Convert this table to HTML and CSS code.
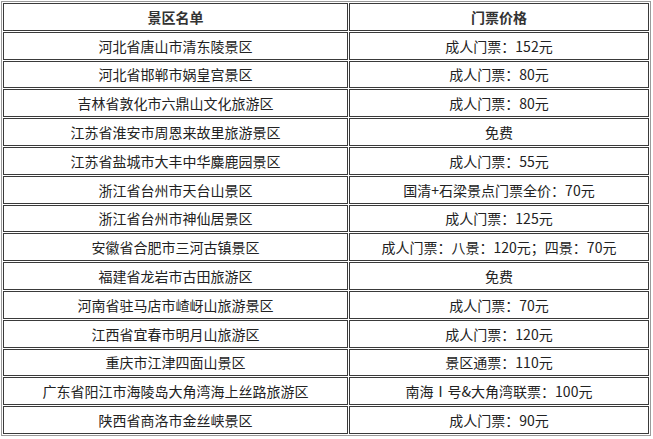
FILE: index.html
```html
<!DOCTYPE html>
<html lang="zh">
<head>
<meta charset="utf-8">
<title>景区名单</title>
<link rel="stylesheet" href="styles.css">
</head>
<body>
<table class="price-table">
  <thead>
    <tr><th class="col-name">景区名单</th><th class="col-price">门票价格</th></tr>
  </thead>
  <tbody>
    <tr><td>河北省唐山市清东陵景区</td><td>成人门票：152元</td></tr>
    <tr><td>河北省邯郸市娲皇宫景区</td><td>成人门票：80元</td></tr>
    <tr><td>吉林省敦化市六鼎山文化旅游区</td><td>成人门票：80元</td></tr>
    <tr><td>江苏省淮安市周恩来故里旅游景区</td><td>免费</td></tr>
    <tr><td>江苏省盐城市大丰中华麋鹿园景区</td><td>成人门票：55元</td></tr>
    <tr><td>浙江省台州市天台山景区</td><td>国清+石梁景点门票全价：70元</td></tr>
    <tr><td>浙江省台州市神仙居景区</td><td>成人门票：125元</td></tr>
    <tr><td>安徽省合肥市三河古镇景区</td><td>成人门票：八景：120元；四景：70元</td></tr>
    <tr><td>福建省龙岩市古田旅游区</td><td>免费</td></tr>
    <tr><td>河南省驻马店市嵖岈山旅游景区</td><td>成人门票：70元</td></tr>
    <tr><td>江西省宜春市明月山旅游区</td><td>成人门票：120元</td></tr>
    <tr><td>重庆市江津四面山景区</td><td>景区通票：110元</td></tr>
    <tr><td>广东省阳江市海陵岛大角湾海上丝路旅游区</td><td>南海Ⅰ号&amp;大角湾联票：100元</td></tr>
    <tr><td>陕西省商洛市金丝峡景区</td><td>成人门票：90元</td></tr>
  </tbody>
</table>
</body>
</html>
```

FILE: styles.css
```css
html, body {
  margin: 0;
  padding: 0;
  background: #ffffff;
}

body {
  padding: 1px 0 0 1px;
  font-family: "Noto Sans CJK SC", "Liberation Sans", sans-serif;
  font-size: 14px;
  color: #222222;
}

.price-table {
  width: 650px;
  border-collapse: separate;
  border-spacing: 1px;
  border: 1px solid #9a9a9a;
}

.price-table th,
.price-table td {
  border: 1px solid #3a3a3a;
  height: 27.8px;
  padding: 0;
  text-align: center;
  vertical-align: middle;
  line-height: 18px;
  box-sizing: border-box;
}

.price-table th {
  font-weight: bold;
  color: #333333;
}

.col-name {
  width: 345px;
}

.col-price {
  width: 300px;
}
```
